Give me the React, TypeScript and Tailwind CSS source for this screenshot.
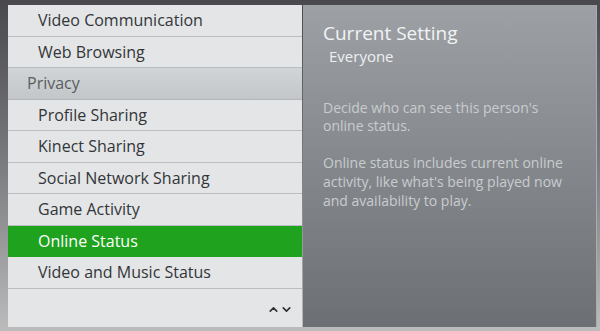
import { ChevronUp, ChevronDown } from "lucide-react";

const rows = [
  { label: "Video Communication" },
  { label: "Web Browsing" },
  { label: "Privacy", header: true },
  { label: "Profile Sharing" },
  { label: "Kinect Sharing" },
  { label: "Social Network Sharing" },
  { label: "Game Activity" },
  { label: "Online Status", active: true },
  { label: "Video and Music Status" },
];

export default function App() {
  return (
    <div
      className="w-[600px] h-[331px] overflow-hidden bg-gradient-to-b from-[#48484d] via-[#7b7c80] to-[#bcbcbc] pt-[5px] pl-[8px]"
      style={{ fontFamily: '"Open Sans", "Noto Sans", sans-serif' }}
    >
      <div className="flex h-[322px]">
        {/* menu list */}
        <div className="w-[294px] flex flex-col bg-[#e3e5e7]">
          {rows.map((r) =>
            r.header ? (
              <div
                key={r.label}
                className="h-[31.5px] flex items-center pl-[19px] text-[16px] text-[#5a5d60] bg-gradient-to-b from-[#d2d5d8] to-[#c3c6c9] border-b border-[#b3b6ba]"
              >
                {r.label}
              </div>
            ) : r.active ? (
              <div
                key={r.label}
                className="h-[31.5px] flex items-center pl-[30px] text-[16px] text-white bg-[#1fa21d] border-b border-[#1fa21d]"
              >
                {r.label}
              </div>
            ) : (
              <div
                key={r.label}
                className="h-[31.5px] flex items-center pl-[30px] text-[16px] text-[#333538] border-b border-[#b9bcc0]"
              >
                {r.label}
              </div>
            )
          )}
          <div className="flex-1 flex items-end justify-end pr-[9px] pb-[11px] text-[#2e3033]">
            <ChevronUp size={13} strokeWidth={3} />
            <ChevronDown size={13} strokeWidth={3} />
          </div>
        </div>

        {/* detail panel */}
        <div className="w-[294px] ml-px border-r border-[#a9acaf] bg-gradient-to-b from-[#9da1a5] to-[#6c7075] pl-[20px] pt-[16px] text-white">
          <div className="text-[19px] leading-[24px] text-[#f2f3f4]">Current Setting</div>
          <div className="text-[15px] leading-[20px] pl-[6px] mt-[1px] text-[#eef0f1]">Everyone</div>
          <p className="mt-[33px] text-[14px] leading-[18px] text-[#c9cccf] pr-4">
            Decide who can see this person's online status.
          </p>
          <p className="mt-[18px] text-[14px] leading-[19px] text-[#c9cccf] pr-4">
            Online status includes current online activity, like what's being played now and availability to play.
          </p>
        </div>
      </div>
    </div>
  );
}
